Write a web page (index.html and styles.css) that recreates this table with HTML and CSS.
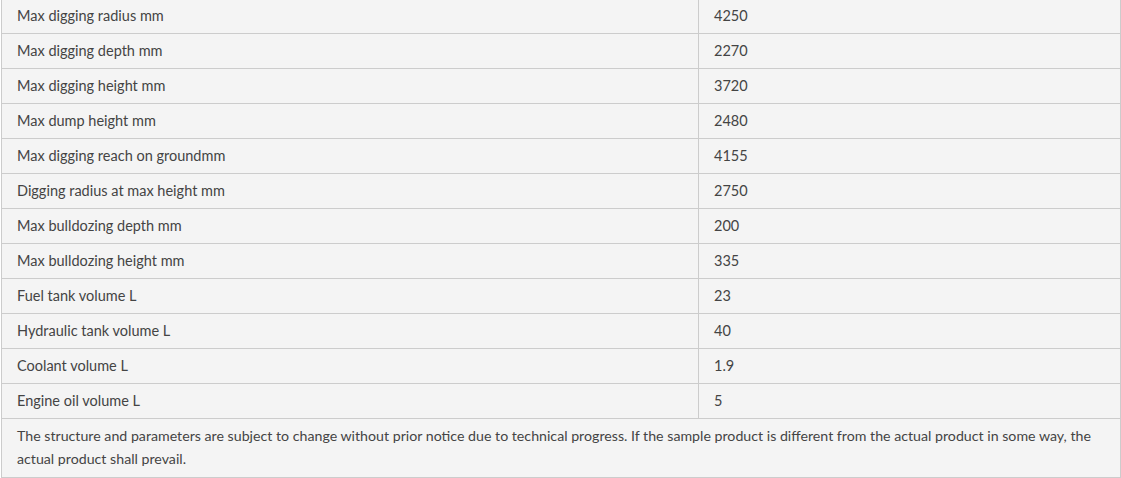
FILE: index.html
```html
<!DOCTYPE html>
<html>
<head>
<meta charset="utf-8">
<link rel="stylesheet" href="styles.css">
</head>
<body>
<table class="spec">
  <colgroup><col class="c1"><col class="c2"></colgroup>
  <tbody>
    <tr><td>Max digging radius mm</td><td>4250</td></tr>
    <tr><td>Max digging depth mm</td><td>2270</td></tr>
    <tr><td>Max digging height mm</td><td>3720</td></tr>
    <tr><td>Max dump height mm</td><td>2480</td></tr>
    <tr><td>Max digging reach on groundmm</td><td>4155</td></tr>
    <tr><td>Digging radius at max height mm</td><td>2750</td></tr>
    <tr><td>Max bulldozing depth mm</td><td>200</td></tr>
    <tr><td>Max bulldozing height mm</td><td>335</td></tr>
    <tr><td>Fuel tank volume L</td><td>23</td></tr>
    <tr><td>Hydraulic tank volume L</td><td>40</td></tr>
    <tr><td>Coolant volume L</td><td>1.9</td></tr>
    <tr><td>Engine oil volume L</td><td>5</td></tr>
    <tr><td class="note" colspan="2">The structure and parameters are subject to change without prior notice due to technical progress. If the sample product is different from the actual product in some way, the actual product shall prevail.</td></tr>
  </tbody>
</table>
</body>
</html>
```
FILE: styles.css
```css
html, body {
  margin: 0;
  padding: 0;
  background: #ffffff;
}
.spec {
  margin: -2px 0 0 1px;
  width: 1120px;
  border-collapse: collapse;
  table-layout: fixed;
  font-family: Lato, "Open Sans", sans-serif;
  font-size: 14.5px;
  color: #444444;
  background: #f4f4f4;
}
.c1 { width: 697px; }
.spec td {
  border: 1px solid #cccccc;
  height: 35px;
  padding: 0 15px;
  box-sizing: border-box;
  vertical-align: middle;
  line-height: 22px;
}
.spec td.note {
  height: 58px;
  padding: 5px 15px 7px;
  font-size: 14.2px;
  line-height: 23px;
}
```
